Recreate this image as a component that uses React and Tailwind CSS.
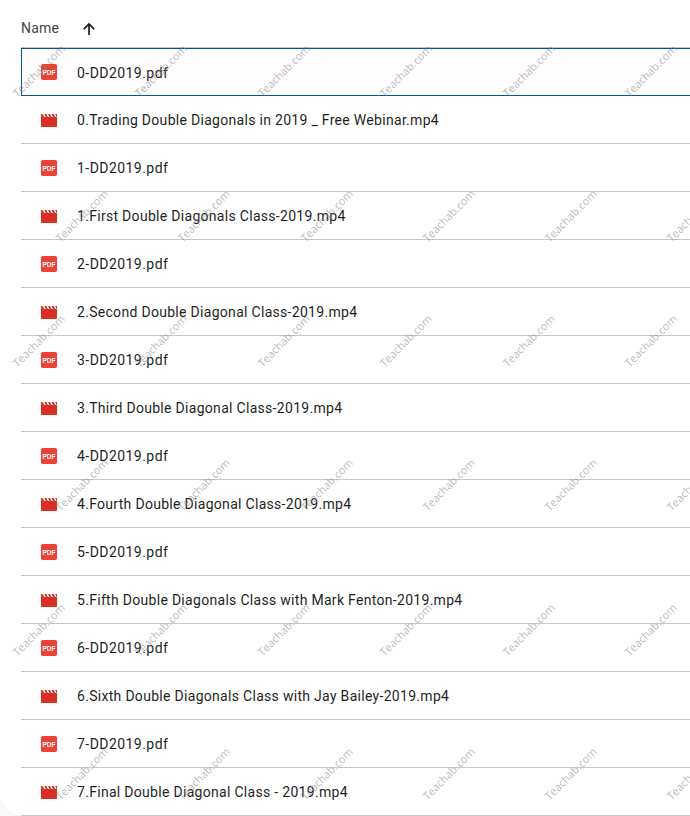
import React from "react";

const files = [
  { name: "0-DD2019.pdf", type: "pdf" },
  { name: "0.Trading Double Diagonals in 2019 _ Free Webinar.mp4", type: "video" },
  { name: "1-DD2019.pdf", type: "pdf" },
  { name: "1.First Double Diagonals Class-2019.mp4", type: "video" },
  { name: "2-DD2019.pdf", type: "pdf" },
  { name: "2.Second Double Diagonal Class-2019.mp4", type: "video" },
  { name: "3-DD2019.pdf", type: "pdf" },
  { name: "3.Third Double Diagonal Class-2019.mp4", type: "video" },
  { name: "4-DD2019.pdf", type: "pdf" },
  { name: "4.Fourth Double Diagonal Class-2019.mp4", type: "video" },
  { name: "5-DD2019.pdf", type: "pdf" },
  { name: "5.Fifth Double Diagonals Class with Mark Fenton-2019.mp4", type: "video" },
  { name: "6-DD2019.pdf", type: "pdf" },
  { name: "6.Sixth Double Diagonals Class with Jay Bailey-2019.mp4", type: "video" },
  { name: "7-DD2019.pdf", type: "pdf" },
  { name: "7.Final Double Diagonal Class - 2019.mp4", type: "video" },
];

// watermark centres, staggered rows
const oddX = [38.5, 161, 283.5, 406, 528.5, 651];
const evenX = [81.5, 204, 326.5, 448.5, 571, 693];
const marks = [
  ...oddX.map((x) => [x, 71]),
  ...evenX.map((x) => [x, 216]),
  ...oddX.map((x) => [x, 340.5]),
  ...evenX.map((x) => [x, 485]),
  ...oddX.map((x) => [x, 630]),
  ...evenX.map((x) => [x, 774]),
];

const PdfIcon = () => (
  <svg width="16" height="16" viewBox="0 0 16 16" className="shrink-0">
    <rect width="16" height="16" rx="1.8" fill="#ea4335" />
    <text
      x="8"
      y="10.6"
      textAnchor="middle"
      fontSize="6.6"
      fontWeight="700"
      fill="#ffffff"
      fontFamily="Liberation Sans, sans-serif"
    >
      PDF
    </text>
  </svg>
);

const VideoIcon = () => (
  <svg width="16" height="16" viewBox="0 0 16 16" className="shrink-0">
    <path
      d="M0 2h1.6l1.5 3h1.7L3.3 2h2l1.5 3h1.7L7 2h2l1.5 3h1.7L10.7 2h2l1.5 3H16V2v12.2a.8.8 0 0 1-.8.8H.8a.8.8 0 0 1-.8-.8z"
      fill="#d93025"
    />
    <path d="M14.2 2H16v3h-.3z" fill="#d93025" />
  </svg>
);

const Row = ({ file, selected }) => (
  <div
    className={
      selected
        ? "flex h-[48px] items-center border border-r-0 border-[#0b4ea2] bg-[#fffdfd] pl-[19px]"
        : "flex h-[48px] items-center border-b border-[#c7c7c7] pl-[20px]"
    }
  >
    {file.type === "pdf" ? <PdfIcon /> : <VideoIcon />}
    <span
      className={
        file.type === "pdf"
          ? "ml-[20px] pt-[2px] tracking-[0.45px] whitespace-nowrap"
          : "ml-[20px] pt-[2px] tracking-[0.3px] whitespace-nowrap"
      }
    >
      {file.name}
    </span>
  </div>
);

export default function App() {
  return (
    <div className="h-[816px] w-[690px] overflow-hidden bg-[#f9f9f9]">
      <div className="relative h-[816px] w-[690px] overflow-hidden rounded-bl-[24px] bg-white font-['Roboto',sans-serif] text-[14px] text-[#1f1f1f]">
        <div className="flex h-[47px] items-center pl-[21px] pt-[10px]">
          <span className="tracking-[0.2px] text-[#444746]">Name</span>
          <svg width="16" height="16" viewBox="0 0 16 16" className="ml-[22px]">
            <path
              d="M8 14V3M2.8 8.2 8 3l5.2 5.2"
              fill="none"
              stroke="#1f1f1f"
              strokeWidth="1.7"
            />
          </svg>
        </div>
        <div className="ml-[21px] border-t border-[#c7c7c7]">
          {files.map((file, i) => (
            <Row key={file.name} file={file} selected={i === 0} />
          ))}
        </div>
        {marks.map(([x, y]) => (
          <span
            key={`${x}-${y}`}
            className="pointer-events-none absolute -translate-x-1/2 -translate-y-1/2 -rotate-45 font-['Open_Sans',sans-serif] text-[11px] whitespace-nowrap text-[#8a8a8a]/60"
            style={{ left: x, top: y }}
          >
            Teachab.com
          </span>
        ))}
      </div>
    </div>
  );
}
